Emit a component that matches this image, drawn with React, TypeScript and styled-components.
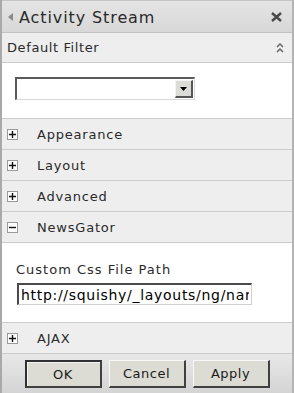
import * as React from 'react';
import styled, { createGlobalStyle } from 'styled-components';

const Global = createGlobalStyle`
  html, body {
    margin: 0;
    padding: 0;
    background: #fff;
  }
  body {
    font-family: "DejaVu Sans", Verdana, sans-serif;
  }
`;

const Panel = styled.section`
  width: 294px;
  height: 393px;
  box-sizing: border-box;
  border-left: 2px solid #a9a9a9;
  border-right: 2px solid #b4b4b4;
  display: flex;
  flex-direction: column;
  overflow: hidden;
  background: #fff;
`;

const TitleBar = styled.header`
  height: 33px;
  box-sizing: border-box;
  display: flex;
  align-items: center;
  padding: 1px 10px 0 6px;
  background: linear-gradient(#e4e4e4, #d8d8d8);
  border-top: 1px solid #c4c4c4;
  border-bottom: 1px solid #c2c2c2;
`;

const Title = styled.h1`
  margin: 0 0 0 6px;
  flex: 1;
  font-size: 16px;
  font-weight: normal;
  color: #2a2a2a;
  letter-spacing: 0.9px;
`;

const SectionHead = styled.div`
  height: 30px;
  box-sizing: border-box;
  display: flex;
  align-items: center;
  padding: 0 8px 0 5px;
  background: #eeeeee;
  border-bottom: 1px solid #cbcbcb;
  font-size: 13px;
  color: #2a2a2a;
  letter-spacing: 0.6px;
`;

const HeadLabel = styled.span`
  flex: 1;
`;

const Row = styled.div`
  height: 31px;
  box-sizing: border-box;
  display: flex;
  align-items: center;
  padding: 1px 0 0 5px;
  background: #eeeeee;
  border-bottom: 1px solid #cbcbcb;
  font-size: 13px;
  color: #2a2a2a;
  letter-spacing: 0.8px;
`;

const Toggle = styled.span`
  width: 11px;
  height: 11px;
  box-sizing: border-box;
  border: 1px solid #9a9a9a;
  background: #fff;
  display: flex;
  align-items: center;
  justify-content: center;
  margin-right: 19px;
`;

const Body = styled.div<{ $h: number }>`
  height: ${p => p.$h}px;
  box-sizing: border-box;
  background: #fff;
  border-bottom: 1px solid #cbcbcb;
  padding: 14px 14px 0 13px;
`;

const SelectBox = styled.div`
  width: 180px;
  height: 23px;
  box-sizing: border-box;
  border-top: 2px solid #5a5a5a;
  border-left: 2px solid #5a5a5a;
  border-right: 1px solid #d8d8d8;
  border-bottom: 1px solid #d8d8d8;
  background: #fff;
  display: flex;
  justify-content: flex-end;
  align-items: center;
  padding-right: 1px;
`;

const DropBtn = styled.span`
  width: 18px;
  height: 18px;
  box-sizing: border-box;
  background: #dcdcd6;
  border-right: 2px solid #555;
  border-bottom: 2px solid #555;
  border-top: 1px solid #f4f4f4;
  border-left: 1px solid #f4f4f4;
  display: flex;
  align-items: center;
  justify-content: center;
`;

const FieldLabel = styled.div`
  font-size: 13px;
  color: #2a2a2a;
  margin: 5px 0 6px 1px;
  letter-spacing: 1px;
`;

const TextInput = styled.input`
  width: 235px;
  height: 22px;
  box-sizing: border-box;
  margin: 0 0 0 2px;
  padding: 0 2px;
  font-family: "DejaVu Sans", Verdana, sans-serif;
  font-size: 14px;
  letter-spacing: 0.7px;
  color: #000;
  border-top: 2px solid #4a4a4a;
  border-left: 2px solid #4a4a4a;
  border-right: 1px solid #d0d0d0;
  border-bottom: 1px solid #d0d0d0;
  outline: none;
  background: #fff;
`;

const Footer = styled.footer`
  flex: 1;
  display: flex;
  justify-content: center;
  align-items: flex-start;
  gap: 7px;
  padding-top: 6px;
  background: linear-gradient(#e8e8e8, #d4d4d4);
`;

const Button = styled.button<{ $primary?: boolean }>`
  width: 77px;
  height: 28px;
  box-sizing: border-box;
  font-family: "DejaVu Sans", Verdana, sans-serif;
  font-size: 13px;
  letter-spacing: 0.5px;
  color: #1a1a1a;
  background: #dcdcd4;
  padding: 0;
  border-top: ${p => (p.$primary ? '2px solid #303030' : '1px solid #f8f8f8')};
  border-left: ${p => (p.$primary ? '2px solid #303030' : '1px solid #f8f8f8')};
  border-right: 2px solid #404040;
  border-bottom: 2px solid #404040;
  box-shadow: ${p => (p.$primary ? 'inset 1px 1px 0 #f4f4f4' : 'none')};
`;

const Plus = () => (
  <svg width="7" height="7" viewBox="0 0 7 7">
    <path d="M0 3.5h7M3.5 0v7" stroke="#111" strokeWidth="1.4" />
  </svg>
);

const Minus = () => (
  <svg width="7" height="7" viewBox="0 0 7 7">
    <path d="M0 3.5h7" stroke="#111" strokeWidth="1.4" />
  </svg>
);

const sections = ['Appearance', 'Layout', 'Advanced'];

export default function App() {
  return (
    <>
      <Global />
      <Panel>
        <TitleBar>
          <svg width="5" height="8" viewBox="0 0 5 8">
            <path d="M5 0v8L0 4z" fill="#8a8a8a" />
          </svg>
          <Title>Activity Stream</Title>
          <svg width="11" height="10" viewBox="0 0 11 10">
            <path d="M1 1l9 8M10 1l-9 8" stroke="#4a4a4a" strokeWidth="2.4" />
          </svg>
        </TitleBar>
        <SectionHead>
          <HeadLabel>Default Filter</HeadLabel>
          <svg width="8" height="12" viewBox="0 0 8 12">
            <path d="M1 5l3-3 3 3M1 10l3-3 3 3" stroke="#666" strokeWidth="1.5" fill="none" />
          </svg>
        </SectionHead>
        <Body $h={56}>
          <SelectBox>
            <DropBtn>
              <svg width="7" height="4" viewBox="0 0 7 4">
                <path d="M0 0h7L3.5 4z" fill="#000" />
              </svg>
            </DropBtn>
          </SelectBox>
        </Body>
        {sections.map(s => (
          <Row key={s}>
            <Toggle>
              <Plus />
            </Toggle>
            {s}
          </Row>
        ))}
        <Row>
          <Toggle>
            <Minus />
          </Toggle>
          NewsGator
        </Row>
        <Body $h={80}>
          <FieldLabel>Custom Css File Path</FieldLabel>
          <TextInput readOnly value="http://squishy/_layouts/ng/narrow.css" />
        </Body>
        <Row>
          <Toggle>
            <Plus />
          </Toggle>
          AJAX
        </Row>
        <Footer>
          <Button $primary>OK</Button>
          <Button>Cancel</Button>
          <Button>Apply</Button>
        </Footer>
      </Panel>
    </>
  );
}
